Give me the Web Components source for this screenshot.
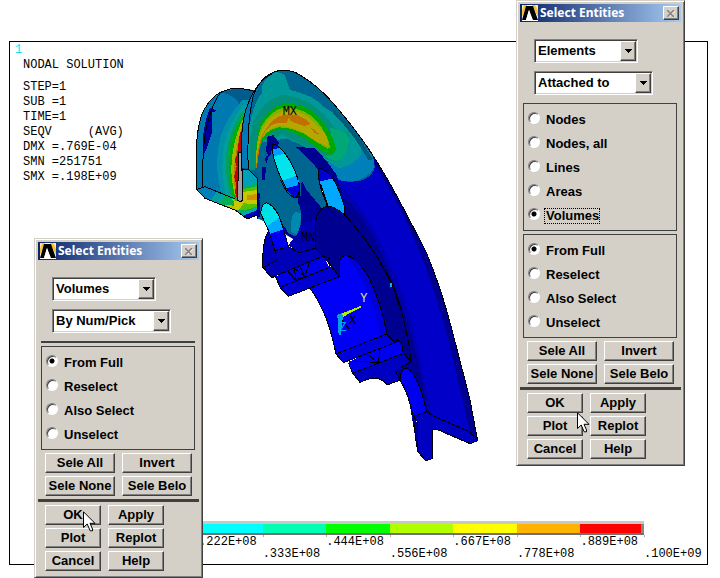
<!DOCTYPE html>
<html lang="en">
<head>
<meta charset="utf-8">
<title>Nodal Solution</title>
<style>
  html, body { margin: 0; background: #fff; }
</style>
</head>
<body>
<app-desktop></app-desktop>

<script>
const define = (name, template, connect) => customElements.define(name, class extends HTMLElement {
  constructor() { super(); this.attachShadow({ mode: 'open' }); }
  connectedCallback() {
    this.shadowRoot.innerHTML = typeof template === 'function' ? template(this) : template;
    if (connect) connect(this);
  }
});
const list = (el, name) => (el.getAttribute(name) || '').split('|');

/* Push button with a raised bevel */
define('win-button', `
<style>
  :host { display: grid; }
  button { height: 20px; padding: 0; margin: 0; border: 1px solid; border-color: #fff #404040 #404040 #fff;
    box-shadow: inset -1px -1px #808080; background: #d4d0c8; color: #000;
    font: bold 13px/16px "Liberation Sans", Arial, sans-serif; white-space: nowrap; border-radius: 0; }
</style>
<button type="button"><slot></slot></button>`);

/* Drop-down list with a sunken field */
define('win-select', el => `
<style>
  :host { display: grid; height: 24px; box-sizing: border-box; border: 1px solid;
    border-color: #808080 #fff #fff #808080; box-shadow: inset 1px 1px #404040, inset -1px -1px #d4d0c8; background: #fff; }
  select, span { grid-area: 1 / 1; }
  select { appearance: none; border: 0; margin: 1px; padding: 0 18px 0 2px; background: transparent; color: #000; outline: 0;
    font: bold 13px/20px "Liberation Sans", Arial, sans-serif; border-radius: 0; }
  span { justify-self: end; width: 16px; margin: 1px; box-sizing: border-box; background: #d4d0c8; pointer-events: none;
    border: 1px solid; border-color: #fff #404040 #404040 #fff; box-shadow: inset -1px -1px #808080; display: grid; place-items: center; }
</style>
<select aria-label="${el.getAttribute('label')}"><option>${el.getAttribute('value')}</option></select>
<span><svg width="7" height="4" shape-rendering="crispEdges"><path d="M0 0H7L3.500 4Z"/></svg></span>`);

/* Framed group of radio buttons */
define('radio-group', el => `
<style>
  fieldset { margin: 0; padding: 3px 4px; border: 1px solid #404040; min-width: 0; }
  label { display: flex; align-items: center; gap: 4px; height: 24px;
    font: bold 13px/16px "Liberation Sans", Arial, sans-serif; }
  input { appearance: none; width: 12px; height: 12px; margin: 0 0 2px; border-radius: 50%; box-sizing: border-box;
    border: 1px solid; border-color: #808080 #fff #fff #808080; background: #fff; box-shadow: inset 1px 1px #404040; outline: 0; }
  input:checked { background: radial-gradient(circle at 5px 5px, #000 2px, #fff 3px); }
  .text { border: 1px dotted transparent; margin-top: 2px; padding: 0 0 0 1px; height: 14px; line-height: 14px; }
  .focus { border-color: #000; }
</style>
<fieldset aria-label="${el.getAttribute('label')}">${list(el, 'options').map(o => `
  <label><input type="radio" name="choice"${o === el.getAttribute('value') ? ' checked' : ''}><span class="text${o === el.getAttribute('focused') ? ' focus' : ''}">${o}</span></label>`).join('')}
</fieldset>`);

/* Tool window: title bar, selection fields (slotted) and its command buttons */
define('select-dialog', `
<style>
  :host { display: block; width: 169px; box-sizing: border-box; padding: 3px 3px 6px; background: #d4d0c8;
    border: 1px solid; border-color: #d4d0c8 #404040 #404040 #d4d0c8; box-shadow: inset 1px 1px #fff, inset -1px -1px #808080; }
  header { display: flex; align-items: center; height: 18px; padding: 0 2px; gap: 2px;
    background: linear-gradient(90deg, #0a246a, #a6caf0); color: #fff; }
  h2 { flex: 1; margin: 0; font: bold 12px/18px "Noto Sans", "Open Sans", sans-serif; white-space: nowrap; }
  header button { width: 16px; height: 14px; padding: 0; border: 1px solid; border-color: #fff #404040 #404040 #fff;
    box-shadow: inset -1px -1px #808080; background: #d4d0c8; display: grid; place-items: center; border-radius: 0; }
  .fields { padding: 17px 4px 0 3px; }
  .grid { display: grid; gap: 3px 7px; margin: 3px 7px; }
  .pair { grid-template-columns: 70px 70px; }
  .commands { grid-template-columns: 56px 56px; margin-bottom: 0; }
  hr { height: 3px; margin: 0; border: 0; background: #404040; }
</style>
<header>
  <svg width="16" height="16" viewBox="0 0 16 16" aria-hidden="true">
    <path fill="#fff" d="M0 0H16V16H0Z"/><path fill="#f4c430" d="M0 0H5L0 12ZM10 0H16V12Z"/><path fill="#fdeca0" d="M0 0H2L0 6ZM13 0H16V6Z"/>
    <path d="M4 1H11L16 15H11L7 5L4 15H0Z"/><path fill="#fff" d="M7 5L10 15H4Z"/>
  </svg>
  <h2>Select Entities</h2>
  <button type="button" aria-label="Close"><svg width="8" height="7" viewBox="0 0 8 7"><path d="M1 1L8 7M8 1L1 7" stroke="#fff"/><path d="M0 0L7 7M7 0L0 7" stroke="#808080" stroke-width="1.500"/></svg></button>
</header>
<div class="fields"><slot></slot></div>
<div class="grid pair">
  <win-button>Sele All</win-button><win-button>Invert</win-button>
  <win-button>Sele None</win-button><win-button>Sele Belo</win-button>
</div>
<hr>
<div class="grid commands">
  <win-button>OK</win-button><win-button>Apply</win-button>
  <win-button>Plot</win-button><win-button>Replot</win-button>
  <win-button>Cancel</win-button><win-button>Help</win-button>
</div>`);

define('mouse-pointer', `
<style>:host { display: block; } svg { display: block; }</style>
<svg width="13" height="21" viewBox="0 0 13 21" aria-hidden="true"><path fill="#fff" stroke="#000" d="M.5 .8V16.500L4.200 13L7.200 19.800H9.500V18L7 12.300H12Z"/></svg>`);

/* Contour scale */
define('contour-legend', el => {
  const colors = ['#0000ff', '#00b2ff', '#00ffff', '#00ffb2', '#00ff00', '#b2ff00', '#ffff00', '#ffb200', '#ff0000'];
  return `
<style>
  :host { display: grid; grid-template-columns: repeat(9, 1fr) 63px; }
  .bar { grid-column: 1 / 10; display: grid; grid-template-columns: repeat(9, 1fr); height: 14px; box-sizing: border-box;
    border-top: 3px solid #c8c8c8; border-bottom: 2px solid #707070; }
  .bar i:last-child { border-right: 3px solid #888; }
  .label { grid-row: 2; height: 26px; box-sizing: border-box; font: 12px/14px "Liberation Mono", "Courier New", monospace; white-space: nowrap;
    background: linear-gradient(#b0b0b0, #b0b0b0) no-repeat 0 0 / 1px 2px; }
  .label:nth-of-type(even) { padding-top: 12px; }
</style>
<div class="bar">${colors.map(c => `<i style="background:${c}"></i>`).join('')}</div>
${list(el, 'labels').map(t => `<span class="label">${t}</span>`).join('')}`;
});

/* Stress plot of the sectioned wheel */
define('wheel-model', `
<style>
  :host { display: block; }
  svg { display: block; }
  .k { fill: none; stroke: #000; stroke-width: 3; }
  text { font: 36px "Liberation Mono", "Courier New", monospace; }
</style>
<svg width="300" height="410" viewBox="0 0 900 1230" shape-rendering="crispEdges" role="img" aria-label="Equivalent stress">
  <defs>
    <clipPath id="rim"><path d="M202 475L202 355L175 328L155 325L153 240Q156 185 168 148Q190 85 225 52Q250 31 280 31Q310 31 330 45Q385 78 430 130Q490 200 530 258Q585 340 627 420Q670 500 710 580Q748 670 778 780Q810 900 840 1020L863 1142L840 1151L745 1110L727 1109L700 1030L630 960L480 640L215 480Z"/></clipPath>
    <clipPath id="back"><path d="M18 388V290Q20 190 42 150Q62 115 92 97Q125 84 150 85L200 92L175 180V365L135 450L90 433L45 415Z"/></clipPath>
    <clipPath id="s1"><path d="M68 253Q84 252 105 280Q130 315 143 355Q154 395 147 410Q135 418 115 395Q92 360 78 315Q64 275 68 253Z"/></clipPath>
    <clipPath id="s2"><path d="M206 327Q222 322 245 350Q268 385 282 435Q286 460 281 464L245 464Q220 415 210 375Q202 335 206 327Z"/></clipPath>
  </defs>

  <!-- back flange -->
  <g clip-path="url(#back)">
    <path fill="#0078b0" d="M0 60H220V500H0Z"/>
    <path fill="#005c8c" d="M92 97Q125 80 200 92L158 150Q140 105 92 97Z"/>
    <path fill="#000098" d="M39 290L38 240Q42 190 60 142L80 152L65 158V220L50 265Z"/>
    <path fill="#0090a8" d="M158 120Q110 170 92 230Q76 290 84 350L100 440L200 480V120Z"/>
    <path fill="#00a098" d="M160 135Q125 180 108 235Q92 300 100 360L112 440H200V135Z"/>
    <path fill="#00a060" d="M160 150Q130 190 115 245Q103 300 110 350L118 400L160 440V150Z"/>
    <path fill="#00b000" d="M160 160Q134 205 122 255Q112 310 118 360L128 410L160 430V160Z"/>
    <path fill="#a8b000" d="M160 175Q140 215 130 265Q121 320 126 360L133 400L150 425L160 410Z"/>
    <path fill="#c07800" d="M160 188Q145 230 139 270Q130 320 132 370L138 405H160Z"/>
    <path fill="#c80000" d="M150 215L141 285L134 300L140 320L132 350L139 375L135 395L140 415H160V215Z"/>
    <path fill="#00a0a0" d="M45 383L145 421L145 455L45 420Z"/>
    <path fill="#0080b8" d="M18 385L45 380L80 395L60 425L35 410Z"/>
    <path fill="#00b050" d="M105 407L150 423V455L85 430Z"/>
    <path fill="#b0c000" d="M125 415L150 424V455L100 434L140 438Z"/>
  </g>
  <path class="k" d="M18 388V290Q20 190 42 150Q62 112 92 97Q125 82 150 85L190 92M92 97Q70 125 55 180Q36 240 38 380M20 388L45 380L155 425M20 388L45 415L90 433L135 450"/>

  <!-- neck between the flanges -->
  <path fill="#00a0b8" d="M157 330L177 328L202 352V465L172 476L135 450L145 420L157 425Z"/>
  <path fill="#00b060" d="M157 382L202 368V462L165 465L135 450V420Z"/>
  <path fill="#50c000" d="M157 388L202 378V440L165 450L137 447V425Z"/>
  <path fill="#c8c800" d="M157 396L202 390V432L160 430L147 450L132 448V422H157Z"/>
  <path fill="#d09000" d="M170 406L202 402V420H170Z"/>
  <path fill="#00a8b0" d="M150 463L202 440V455L165 468Z"/>
  <path fill="#0000c0" d="M158 468L202 450V465L172 477Z"/>
  <path class="k" d="M135 450L172 477L215 460"/>
  <path fill="#a0a0a0" stroke="#000" stroke-width="3" d="M147 278L157 274V422L150 425L142 420Z"/>

  <!-- rim and disc -->
  <g clip-path="url(#rim)">
    <path fill="#000090" d="M100 0H900V1230H100Z"/>
    <path fill="#0000c8" d="M430 330L545 300Q610 400 660 510Q730 660 780 860L840 1115L725 1075Q700 950 670 825Q620 640 560 540Q520 450 430 390Z"/>
    <path fill="#0000b0" d="M430 350Q520 440 570 545Q640 680 680 850L725 1065L712 1050Q690 910 650 780Q610 650 550 530Q500 435 430 390Z"/>
    <path fill="#006590" d="M150 0H420L530 255L556 320Q545 352 515 361Q480 370 445 360L425 352L440 400L450 450L400 450L350 390L335 360L330 450L348 520L320 535L285 500L205 480L150 330Z"/>
    <path fill="#0080b8" d="M320 110Q380 140 430 165L480 200L550 290L552 322Q540 350 500 362H455Q425 345 400 310L490 300L500 260Z"/>
    <path fill="#009898" d="M215 100Q210 60 260 34L285 45L300 90Q370 105 400 140Q430 160 455 170L430 148Q480 200 512 258L512 285Q490 315 450 325Q415 310 375 275L290 235L200 250L193 330L175 328Q165 270 178 200Q190 130 215 100Z"/>
    <path fill="#00907c" d="M180 328Q175 235 190 185Q225 115 280 105Q370 110 430 200L478 220Q480 280 445 305Q420 310 375 275L280 225L215 240L195 330Z"/>
    <path fill="#00a878" d="M420 205Q470 205 477 240Q475 285 443 305L400 290L435 280Z"/>
    <path fill="#00a800" d="M196 325Q194 240 210 195Q240 135 290 130Q350 132 390 175Q430 225 438 265Q435 284 420 285Q385 270 345 235Q300 208 265 208Q225 220 210 260Z"/>
    <path fill="#80b000" d="M198 320Q196 245 214 200Q245 145 290 142Q345 145 380 182Q415 225 420 262L413 266Q375 245 340 220Q300 202 265 202Q225 210 210 250Z"/>
    <path fill="#b4a800" d="M198 315Q198 245 218 205Q250 152 295 150Q345 155 375 190Q405 215 414 240V258Q375 245 340 218Q300 198 265 198Q222 210 208 250Z"/>
    <path fill="#c07000" d="M199 328Q200 250 226 210Q256 165 285 165H320Q350 175 360 192L345 198L303 184L295 174L290 190Q250 180 225 215Q207 245 204 300ZM360 200L388 222L375 220Z"/>
    <path fill="#000090" d="M232 230L250 225L268 250L245 270L240 290L228 275ZM227 290L237 285L230 310L225 302ZM217 320H228L225 360H216ZM202 400H210V470H202Z"/>
    <path fill="#000090" d="M315 260L375 265Q410 300 440 345L465 430L450 460L410 440L385 330Q350 285 315 260ZM325 400L360 450L400 470L380 560L300 530L345 470L325 430Z"/>
    <path fill="#0078b8" d="M153 325V240Q156 185 168 148Q190 85 225 52L190 110Q173 200 173 325Z"/>
    <path fill="#004e78" d="M196 335L205 350V430L202 470Z" opacity=".6"/>
    <path fill="#005c78" d="M430 148Q500 210 548 298L535 300Q490 220 430 160Z"/>
  </g>
  <path class="k" d="M202 478V355L175 328L155 330V240Q156 185 168 148Q190 85 225 52Q250 31 280 31Q310 31 330 45Q385 78 430 130Q490 200 530 258Q585 340 627 420Q670 500 710 580Q748 670 778 780Q810 900 840 1020L863 1142L840 1151M175 328Q170 210 185 130Q195 65 245 42"/>

  <!-- web openings -->
  <g transform="translate(180 0)">
    <g clip-path="url(#s1)">
      <path fill="#00e4ec" d="M50 240H160V420H50Z"/><path fill="#00a0ff" d="M50 240H120V275L70 290ZM90 365L145 345V385L100 380Z"/>
      <path fill="#0000d8" d="M50 240H100L85 265L60 270ZM95 382L160 368V420H95Z"/>
      <path fill="#fff" stroke="#000" stroke-width="3" d="M66 290L72 300L100 378L90 370Z"/>
    </g>
    <path class="k" d="M68 253Q84 252 105 280Q130 315 143 355Q154 395 147 410Q135 418 115 395Q92 360 78 315Q64 275 68 253Z"/>
    <g clip-path="url(#s2)">
      <path fill="#00a8ff" d="M190 320H300V480H190Z"/><path fill="#0000d0" d="M190 320H250V355L205 365Z"/>
      <path fill="#fff" stroke="#000" stroke-width="3" d="M205 365L213 375L242 464H230Z"/>
    </g>
    <path class="k" d="M246 464Q220 415 210 375Q202 335 206 327Q222 322 245 350Q268 385 282 435Q286 460 281 464"/>
  </g>

  <g transform="translate(150 360)">
    <!-- front web and lower opening -->
    <path fill="#006890" d="M55 60L120 0L145 35Q190 85 185 120Q180 150 165 170L145 160L125 120L100 70Z"/>
    <path fill="#0000b0" d="M145 195L165 170Q190 140 185 90L225 100V205L178 218Z"/>
    <path fill="#000098" d="M180 70L230 80L222 120L185 130Z"/>
    <path fill="#0088b0" d="M152 155Q150 115 165 95L182 100Q184 140 170 165Z"/>
    <path fill="#00a0ff" d="M130 0H178L170 20L140 25Z"/><path fill="#0000d8" d="M140 24L178 15V45L165 54Q148 45 140 24Z"/>
    <path class="k" d="M122 0Q140 45 165 54Q182 45 178 10"/>
    <path fill="#0000b8" d="M86 153Q66 180 68 263L95 292L115 240L105 212Z"/>
    <path fill="#00e0e8" d="M62 105Q65 70 80 68Q105 75 120 115L85 145Z"/>
    <path fill="#00a8ff" d="M82 138L120 112L132 150L92 165Z"/>
    <path fill="#0000f0" d="M90 162L132 148L145 200L105 212Z"/>
    <path class="k" d="M62 100Q65 70 80 68Q110 80 125 130L145 200L178 218L225 205M62 100L86 153L105 212L115 240L70 263M86 153Q66 180 68 263L95 292"/>

    <!-- hub ring -->
    <path fill="#000090" d="M225 205V130Q232 82 265 79Q300 82 345 140Q430 240 475 360Q505 460 513 545L440 520L298 290L250 228Z"/>
    <path fill="#0000f8" d="M298 290V250Q300 228 318 226Q350 232 385 290Q425 370 440 460L288 522Q270 430 240 375L210 325Z"/>
    <path fill="#0000d8" d="M318 226Q350 232 385 290Q425 370 440 460L420 468Q410 390 370 310Q345 255 318 226Z"/>
    <path class="k" d="M225 205V130Q232 82 265 79Q300 82 345 140Q430 240 475 360Q505 460 513 545M298 290V250Q300 228 318 226Q350 232 385 290Q425 370 440 460M420 250Q445 280 465 330L475 375M210 325Q230 350 240 375Q270 430 288 522"/>
    <path fill="#00b0ff" d="M449 308H456V322H452Z"/>

    <!-- upper hub block -->
    <path fill="#0000b8" d="M105 212L145 200L178 218L225 205L250 228L95 292L70 263L115 240Z"/>
    <path fill="#0000e8" d="M105 290L250 228L268 262L120 322Z"/>
    <path fill="#0000d0" d="M120 322L275 260L298 290L145 349Z"/>
    <path class="k" d="M105 212L145 200L178 218L225 205L250 228L95 292M70 263L95 292L107 290L120 322L145 349L298 290L250 228L268 235V262L120 322M145 275L168 300L163 265L195 290L208 248M180 262L195 290L160 300"/>
  </g>

  <g transform="translate(360 660)">
    <!-- lower hub block -->
    <path fill="#0000d8" d="M78 222L230 162L255 188L100 248Z"/>
    <path fill="#0000f0" d="M115 246L260 180L275 190L280 220L128 280Z"/>
    <path fill="#0000c0" d="M128 280L280 220L303 245L258 275L270 300L232 315Q215 290 190 294L150 307Z"/>
    <path class="k" d="M78 222L230 162L255 188L100 248ZM116 250L128 280L150 307L165 300Q210 285 232 315L270 300L258 275Q275 258 303 245L280 220L128 280M255 188L262 180L275 190L280 220M135 243L205 248L170 222M205 248L210 207"/>
    <!-- lower web opening and sectioned rim -->
    <path fill="#0000f0" d="M270 290Q275 262 292 266Q325 285 350 395L310 410Q300 350 270 300Z"/>
    <path fill="#000098" d="M295 350L310 410L323 430V515Z"/>
    <path fill="#0000c0" d="M310 410L350 395L370 408L478 455L503 482L480 491L385 450L367 449V535L348 543L323 515V425Z"/>
    <path class="k" d="M270 300Q272 262 292 266Q325 285 350 395L310 410M270 300Q295 340 310 410L323 425V515L348 543L367 535V449L385 450L480 491L503 482L478 455L370 408L350 395M310 410L320 500"/>
    <path fill="#00a0e0" d="M82 105L98 98V115L92 165H86Z"/>
    <path fill="#b4f000" d="M96 100L152 78V83L100 110Z"/>
    <path class="k" d="M96 120L118 148M97 120V130L104 126"/>
  </g>
  <text x="278" y="166">MX</text>
  <text x="333" y="542">MN</text>
  <text x="511" y="725" fill="#e0f060">Y</text>
  <text x="477" y="793">X</text>
  <text x="448" y="812" fill="#00a8ff">Z</text>
</svg>`);

/* Graphics window: run data, model and scale */
define('plot-window', `
<style>
  :host { display: flex; flex-direction: column; border: 1px solid #000; background: #fff; }
  .view { display: flex; flex: 1; }
  .info { width: 180px; box-sizing: border-box; padding: 1px 0 0 13px; font: 12px/15px "Liberation Mono", "Courier New", monospace; }
  .index { margin: 0 0 0 -8px; color: #00e8f8; }
  h1 { margin: 0 0 7px; font: inherit; }
  pre { margin: 0; font: inherit; }
  wheel-model { margin-top: 18px; }
  contour-legend { margin: 0 0 3px 62px; }
</style>
<div class="view">
  <div class="info"><p class="index">1</p><h1>NODAL SOLUTION</h1>
<pre>STEP=1
SUB =1
TIME=1
SEQV     (AVG)
DMX =.769E-04
SMN =251751
SMX =.198E+09</pre></div>
  <wheel-model></wheel-model>
</div>
<contour-legend labels="||.222E+08|.333E+08|.444E+08|.556E+08|.667E+08|.778E+08|.889E+08|.100E+09"></contour-legend>`);

define('app-desktop', `
<style>
  :host { display: grid; position: relative; box-sizing: border-box; min-height: 100vh; padding: 41px 12px 13px 9px; overflow: hidden; }
  select-dialog, mouse-pointer { position: absolute; }
  .entities { top: 0; right: 35px; }
  .volumes { top: 238px; left: 34px; }
  .entities-pointer { top: 412px; right: 130px; }
  .volumes-pointer { top: 511px; left: 83px; }
  win-select { margin: 0 0 8px 11px; width: 104px; }
  win-select.wide { width: 119px; }
  radio-group { display: block; }
  radio-group + radio-group { margin-top: 3px; }
  hr { height: 2px; margin: 0 0 3px; border: 0; background: #404040; }
</style>
<plot-window></plot-window>
<select-dialog class="entities">
  <win-select label="Entity" value="Elements"></win-select>
  <win-select class="wide" label="Criterion" value="Attached to"></win-select>
  <radio-group label="Attached to" options="Nodes|Nodes, all|Lines|Areas|Volumes" value="Volumes" focused="Volumes"></radio-group>
  <radio-group label="Set" options="From Full|Reselect|Also Select|Unselect" value="From Full"></radio-group>
</select-dialog>
<select-dialog class="volumes">
  <win-select label="Entity" value="Volumes"></win-select>
  <win-select class="wide" label="Criterion" value="By Num/Pick"></win-select>
  <hr>
  <radio-group label="Set" options="From Full|Reselect|Also Select|Unselect" value="From Full"></radio-group>
</select-dialog>
<mouse-pointer class="entities-pointer"></mouse-pointer>
<mouse-pointer class="volumes-pointer"></mouse-pointer>`);
</script>
</body>
</html>
